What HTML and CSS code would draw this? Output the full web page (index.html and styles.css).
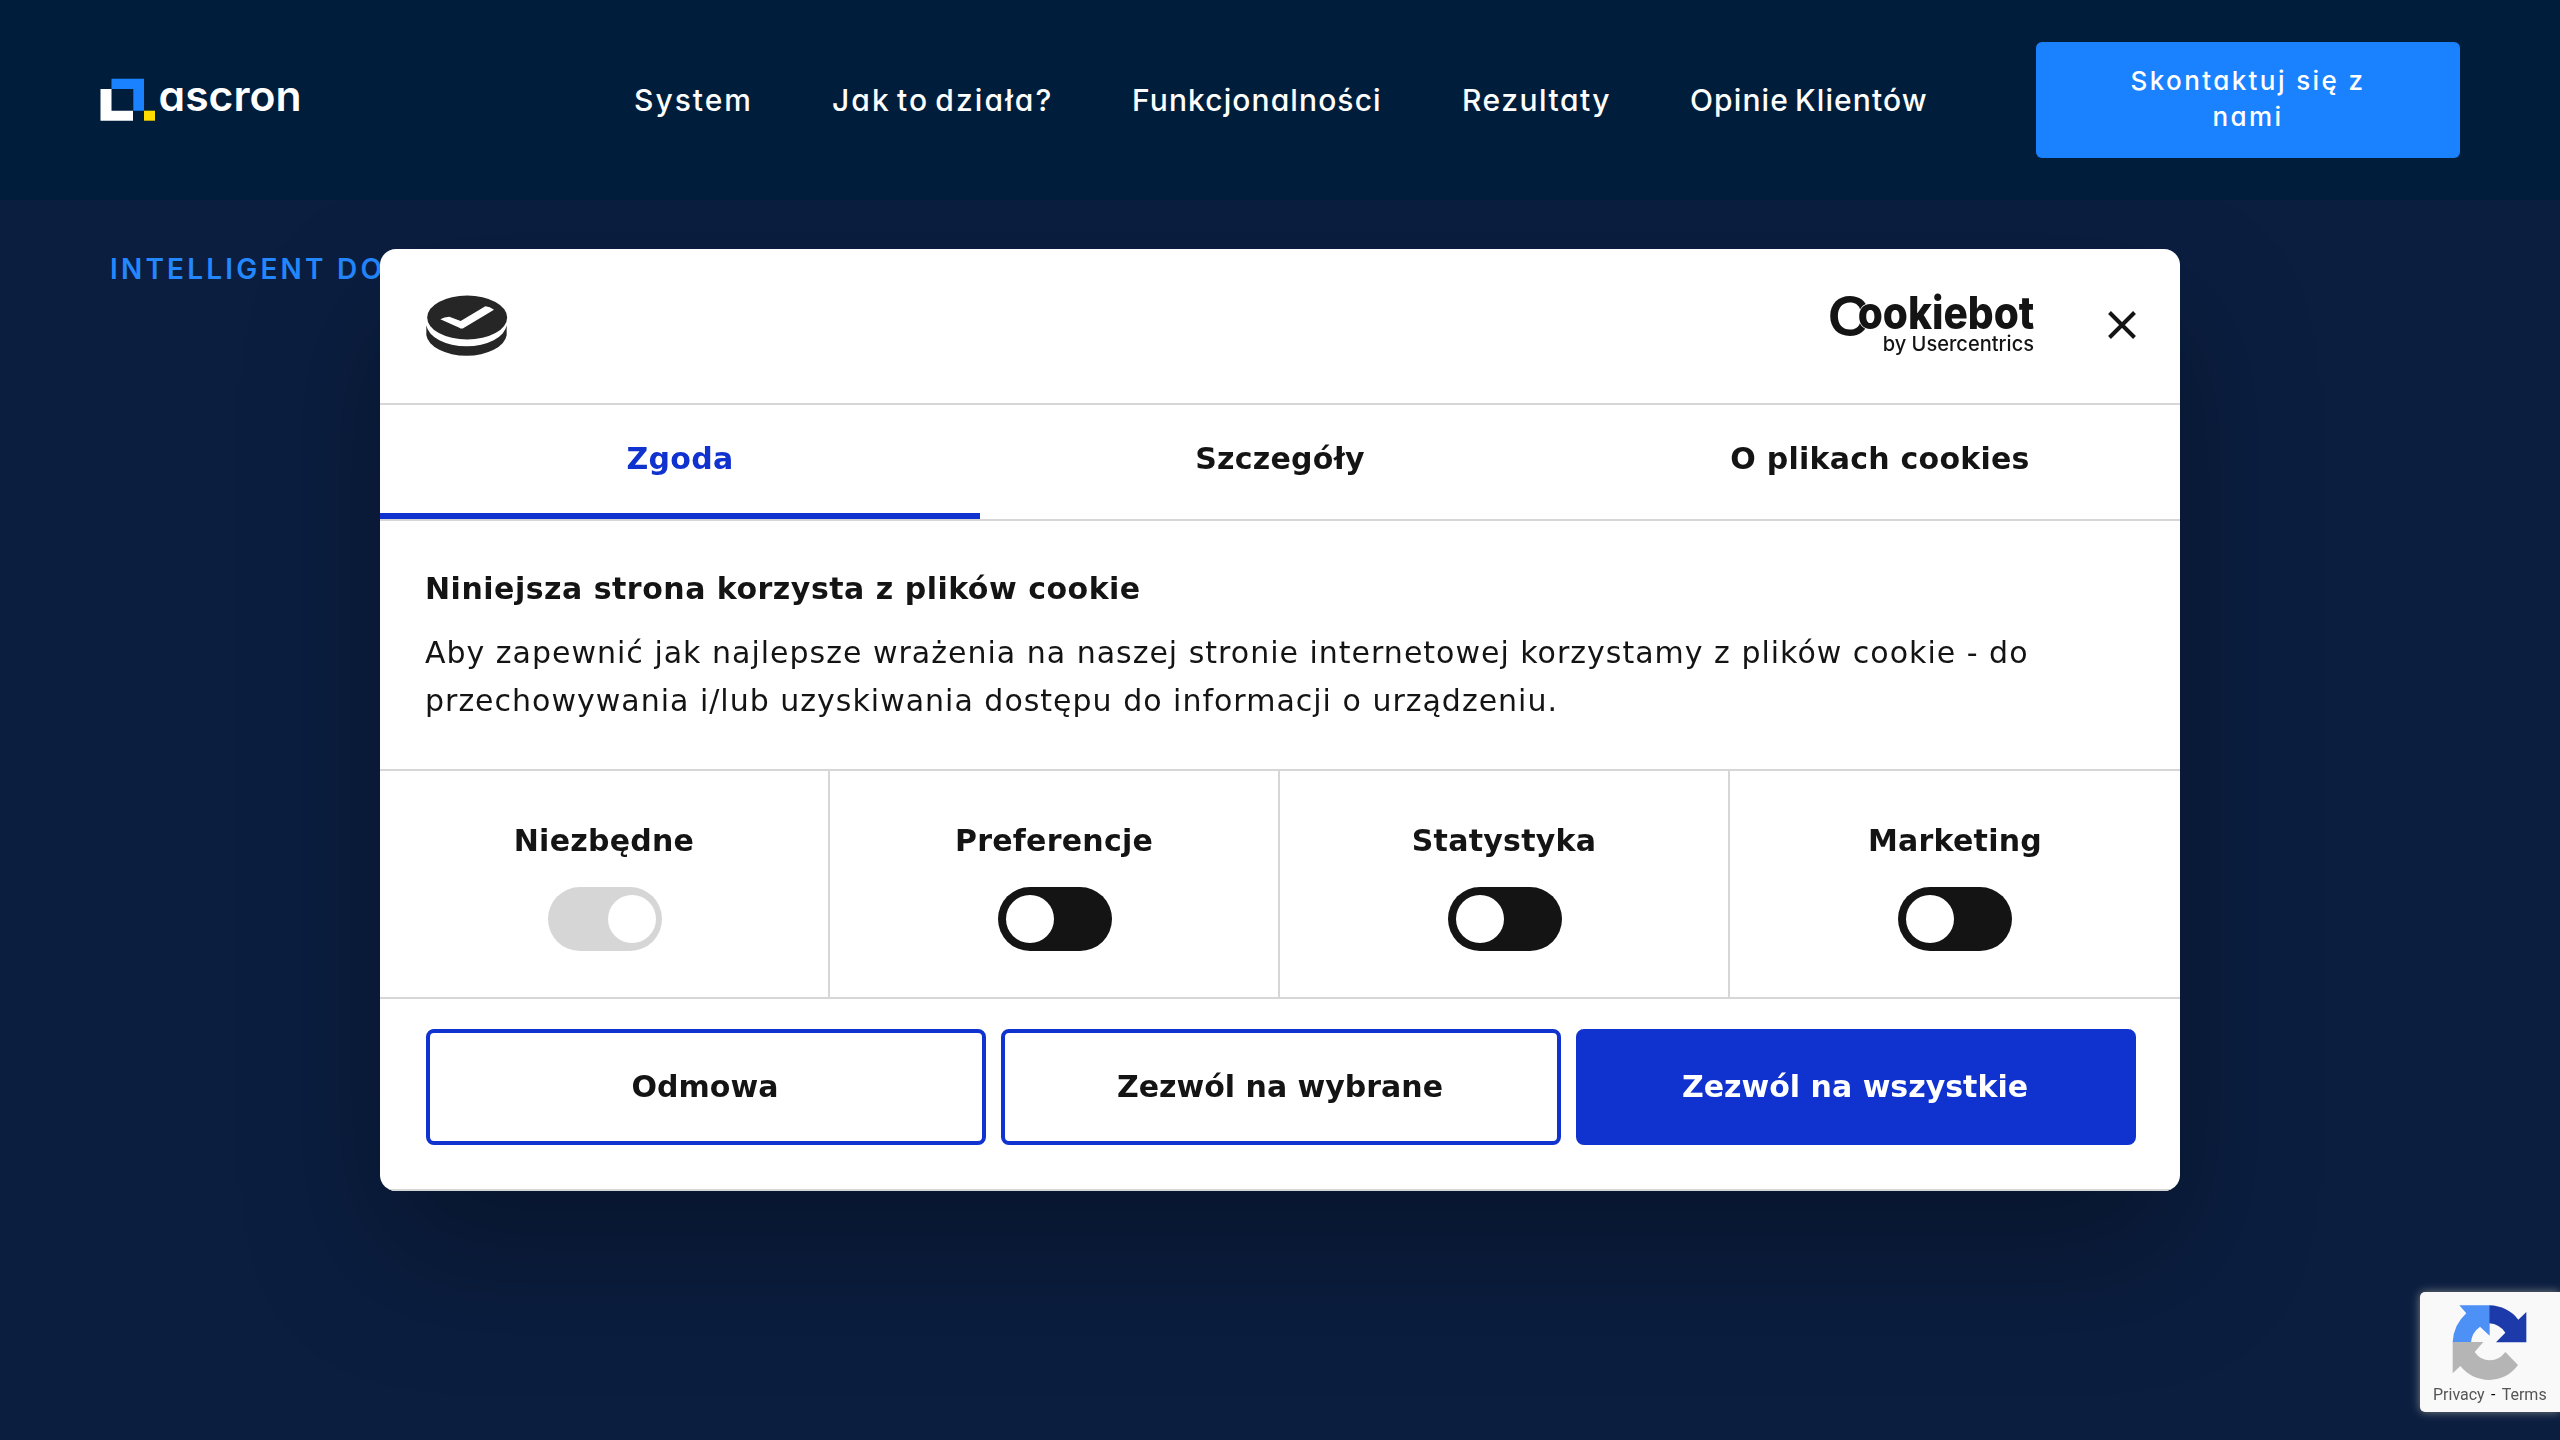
FILE: index.html
```html
<!DOCTYPE html>
<html lang="pl">
<head>
<meta charset="utf-8">
<title>ascron</title>
<link rel="stylesheet" href="styles.css">
</head>
<body>
<header class="site-header">
  <a class="brand">
    <svg class="brand-svg" width="210" height="50" viewBox="0 0 210 50">
      <path fill="#fff" d="M.5 14H11.500V35.700H33V45.700H.5Z"/>
      <path fill="#1a82ff" d="M11.500 3.700H44V35.700H33.300V14H11.500Z"/>
      <path fill="#ffdc00" d="M44 35.700H55V45.700H44Z"/>
      <text class="brand-text" x="58.500" y="36" textLength="143" lengthAdjust="spacingAndGlyphs">ascron</text>
    </svg>
  </a>
  <nav class="nav">
    <a class="nav-system">System</a>
    <a class="nav-how">Jak to działa?</a>
    <a class="nav-features">Funkcjonalności</a>
    <a class="nav-results">Rezultaty</a>
    <a class="nav-reviews">Opinie Klientów</a>
  </nav>
  <a class="cta">Skontaktuj się z nami</a>
</header>
<main class="hero"><p class="eyebrow">INTELLIGENT DOCUMENT</p></main>

<section class="dialog">
  <div class="dialog-head">
    <svg class="cookie" width="82" height="63" viewBox="168 162 246 189">
      <path fill="#262626" d="M169 253V283A121 67 0 0 0 410 283V253A121 69 0 0 1 169 253Z"/>
      <ellipse cx="291.500" cy="229.500" rx="120" ry="66" fill="#262626"/>
      <path fill="#fff" d="M211 235Q223 227 238 227L272 240L346 196Q360 197 372 206L282 260Q275 265 268 260Z"/>
    </svg>
    <div class="head-right">
      <svg class="cookiebot" width="206" height="63" viewBox="58 160 618 189">
        <text class="cb-c" x="53" y="286" textLength="130" lengthAdjust="spacingAndGlyphs">C</text>
        <text class="cb-word" x="144" y="265" textLength="530" lengthAdjust="spacingAndGlyphs">ookiebot</text>
        <text class="cb-by" x="219" y="331" textLength="454" lengthAdjust="spacingAndGlyphs">by Usercentrics</text>
      </svg>
      <svg class="close" width="28" height="28" viewBox="0 0 28 28"><path d="M1.500 1.500L26.500 26.500M26.500 1.500L1.500 26.500" stroke="#141414" stroke-width="4"/></svg>
    </div>
  </div>
  <div class="tabs">
    <div class="tab active">Zgoda</div>
    <div class="tab">Szczegóły</div>
    <div class="tab">O plikach cookies</div>
  </div>
  <div class="content">
    <h2 class="title">Niniejsza strona korzysta z plików cookie</h2>
    <p class="desc">Aby zapewnić jak najlepsze wrażenia na naszej stronie internetowej korzystamy z plików cookie - do przechowywania i/lub uzyskiwania dostępu do informacji o urządzeniu.</p>
  </div>
  <div class="options">
    <div class="option"><span>Niezbędne</span><i class="switch locked"></i></div>
    <div class="option"><span>Preferencje</span><i class="switch"></i></div>
    <div class="option"><span>Statystyka</span><i class="switch"></i></div>
    <div class="option"><span>Marketing</span><i class="switch"></i></div>
  </div>
  <div class="actions">
    <button class="btn">Odmowa</button>
    <button class="btn">Zezwól na wybrane</button>
    <button class="btn primary">Zezwól na wszystkie</button>
  </div>
</section>

<aside class="recaptcha">
  <svg class="recaptcha-logo" width="76" height="77" viewBox="158 102 228 231">
    <path fill="#4d90f6" d="M180 106H271V197L242 170Q217 188 215 217H160Q162 165 201 130Z"/>
    <path fill="#1c3aa9" d="M270 106Q325 108 357 149L381 126V217H290L318 188Q300 162 270 160Z"/>
    <path fill="#b5b5b5" d="M160 216H252L226 246Q243 271 271 271Q301 270 318 246L356 285Q325 328 270 330Q215 328 183 288L160 310Z"/>
  </svg>
  <div class="legal"><span>Privacy</span><span class="dash">-</span><span>Terms</span></div>
</aside>
</body>
</html>
```
FILE: styles.css
```css
* { box-sizing: border-box; }
body {
  margin: 0;
  height: 1440px;
  overflow: hidden;
  background: #0b1e40;
  font-family: "DejaVu Sans", sans-serif;
}
.site-header {
  height: 200px;
  padding: 0 100px;
  display: flex;
  align-items: center;
  background: #001e3c;
  color: #fff;
  font-family: Inter, sans-serif;
  font-feature-settings: "cv11";
}
.brand { width: 534px; display: block; }
.brand-svg { display: block; overflow: visible; }
.brand-text { font: 600 42px Inter, sans-serif; font-feature-settings: "cv11"; fill: #fff; }
.nav {
  padding-bottom: 1px;
  display: grid;
  grid-template-columns: 198px 300px 330px 228px 346px;
  font-size: 30px;
  font-weight: 500;
  line-height: 44px;
  white-space: nowrap;
}
.nav-system { letter-spacing: 2px; }
.nav-how { letter-spacing: 2.1px; word-spacing: -4px; }
.nav-features { letter-spacing: 1.1px; }
.nav-results { letter-spacing: 1.5px; }
.nav-reviews { letter-spacing: 1.1px; word-spacing: -3px; }
.cta {
  width: 424px;
  height: 116px;
  padding: 21px 80px;
  border-radius: 6px;
  background: #1a82ff;
  font-size: 26px;
  font-weight: 500;
  line-height: 36px;
  letter-spacing: 2.4px;
  text-align: center;
}
.hero { padding: 50px 110px; }
.eyebrow {
  margin: 0;
  color: #2388ff;
  font: 600 28px/38px Inter, sans-serif;
  letter-spacing: 3.2px;
}
.dialog {
  position: fixed;
  left: 380px;
  top: 249px;
  width: 1800px;
  height: 942px;
  overflow: hidden;
  border-radius: 16px;
  background: #fff;
  color: #141414;
  box-shadow: 0 64px 136px rgba(0, 0, 0, .3);
}
.dialog-head {
  height: 156px;
  padding: 0 44px 0 46px;
  display: flex;
  justify-content: space-between;
  align-items: center;
  border-bottom: 2px solid #d6d6d6;
}
.head-right { padding-bottom: 2px; display: flex; align-items: center; gap: 73px; }
.cookie, .cookiebot, .close { display: block; overflow: visible; }
.cb-c { font: 600 165px Inter, sans-serif; fill: #141414; }
.cb-word { font: 800 136px Inter, sans-serif; fill: #141414; stroke: #fff; stroke-width: 4; paint-order: stroke; }
.cb-by { font: 500 62px Inter, sans-serif; fill: #141414; }
.tabs { height: 116px; display: grid; grid-template-columns: repeat(3, 1fr); border-bottom: 2px solid #d6d6d6; }
.tab {
  padding-top: 32px;
  font-size: 30px;
  font-weight: 700;
  line-height: 44px;
  letter-spacing: .25px;
  text-align: center;
}
.tab.active { color: #1032cf; border-bottom: 6px solid #1032cf; }
.content { height: 250px; padding: 46px 46px 0 45px; border-bottom: 2px solid #d6d6d6; }
.title { margin: 0 0 18px; font-size: 30px; line-height: 44px; letter-spacing: .5px; }
.desc { margin: 0; font-size: 30px; line-height: 48px; letter-spacing: 1px; }
.options { height: 228px; display: grid; grid-template-columns: repeat(4, 1fr); border-bottom: 2px solid #d6d6d6; }
.option {
  padding: 48px 0 0 2px;
  display: flex;
  flex-direction: column;
  align-items: center;
  gap: 24px;
  border-right: 2px solid #d6d6d6;
  font-size: 30px;
  font-weight: 700;
  line-height: 44px;
  letter-spacing: .25px;
}
.option span { padding-right: 2px; }
.option:last-child { border-right: 0; padding-left: 0; }
.option:last-child span { padding-right: 0; }
.switch {
  width: 114px;
  height: 64px;
  padding: 8px;
  display: flex;
  border-radius: 32px;
  background: #141414;
}
.switch::before { content: ""; width: 48px; height: 48px; border-radius: 50%; background: #fff; }
.switch.locked { background: #d6d6d6; justify-content: flex-end; padding-right: 6px; }
.actions { height: 192px; padding: 30px 44px 0 46px; display: flex; justify-content: space-between; border-bottom: 2px solid #d6d6d6; }
.btn {
  width: 560px;
  height: 116px;
  padding: 0 2px 2px 0;
  border: 4px solid #1032cf;
  border-radius: 8px;
  background: #fff;
  color: #141414;
  font: 700 30px "DejaVu Sans", sans-serif;
}
.btn.primary { background: #1032cf; color: #fff; }
.recaptcha {
  position: fixed;
  right: 0;
  top: 1292px;
  width: 140px;
  height: 120px;
  padding-top: 12px;
  border-radius: 5px 0 0 5px;
  background: #f9f9f9;
  box-shadow: 0 0 10px gray;
}
.recaptcha-logo { display: block; margin-left: 32px; }
.legal { margin: 4px 13px 0; display: flex; font: 16px/20px Roboto, sans-serif; color: #555; }
.dash { width: 17px; text-align: center; color: #000; }
```
